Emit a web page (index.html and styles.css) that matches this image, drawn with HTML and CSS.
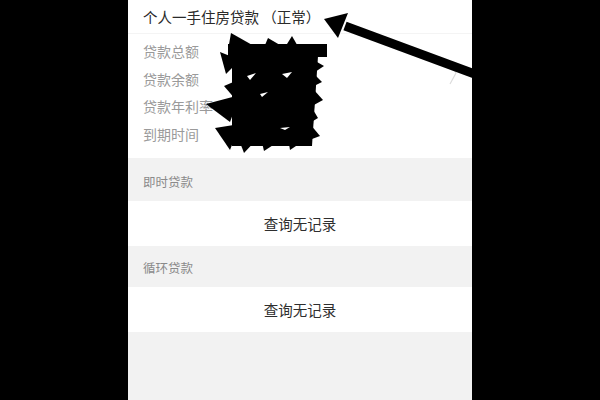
FILE: index.html
```html
<!DOCTYPE html>
<html lang="zh">
<head>
<meta charset="utf-8">
<link rel="stylesheet" href="styles.css">
</head>
<body>
<div class="stage">
  <main class="phone">
    <section class="loan">
      <div class="loan-title">个人一手住房贷款 （正常）</div>
      <ul class="loan-fields">
        <li>贷款总额</li>
        <li>贷款余额</li>
        <li>贷款年利率</li>
        <li>到期时间</li>
      </ul>
      <svg class="chevron" width="12" height="24" viewBox="0 0 12 24"><polyline points="2,2 8,12 2,23" fill="none" stroke="#dcdcdc" stroke-width="1.2"/></svg>
    </section>
    <div class="group-head">即时贷款</div>
    <div class="empty-row">查询无记录</div>
    <div class="group-head">循环贷款</div>
    <div class="empty-row">查询无记录</div>
    <div class="rest"></div>
  </main>
  <svg class="marks" width="600" height="400" viewBox="0 0 600 400">
    <g fill="#000">
      <rect x="228" y="44" width="99" height="13"/>
      <polygon points="231,33 254,46 228,50"/>
      <polygon points="268,38 285,48 262,52"/>
      <polygon points="292,36 300,50 282,52"/>
      <polygon points="232,56 318,56 312,146 232,146"/>
      <polygon points="220,52 240,60 226,74"/>
      <polygon points="310,58 324,66 312,74"/>
      <polygon points="312,72 322,82 310,88"/>
      <polygon points="314,90 323,100 312,106"/>
      <polygon points="206,104 240,95 230,122"/>
      <polygon points="224,86 238,80 236,100"/>
      <polygon points="312,108 318,118 308,124"/>
      <polygon points="310,124 320,136 304,142"/>
      <polygon points="215,128 240,124 230,150"/>
      <polygon points="236,132 262,134 244,153"/>
      <polygon points="260,134 284,138 264,151"/>
      <polygon points="286,126 314,134 290,150"/>
    </g>
    <g fill="#fff">
      <polygon points="247,76 256,73 250,80"/>
      <polygon points="282,74 292,72 287,78"/>
      <polygon points="260,94 268,92 262,97"/>
      <polygon points="280,128 290,127 285,130"/>
    </g>
    <line x1="345" y1="26" x2="480" y2="76" stroke="#000" stroke-width="9"/>
    <polygon points="324,19 348,13 338,38" fill="#000"/>
  </svg>
</div>
</body>
</html>
```
FILE: styles.css
```css
html, body {
  margin: 0;
  padding: 0;
  background: #000;
}
body {
  width: 600px;
  height: 400px;
  overflow: hidden;
  font-family: "Noto Sans CJK SC", "Noto Sans", sans-serif;
}
.stage {
  position: relative;
  width: 600px;
  height: 400px;
}
.phone {
  width: 344px;
  height: 400px;
  margin: 0 auto;
  background: #f2f2f2;
  display: flex;
  flex-direction: column;
}
.loan {
  position: relative;
  background: #fff;
  height: 158px;
  box-sizing: border-box;
}
.loan-title {
  height: 34px;
  line-height: 34px;
  padding-left: 15px;
  font-size: 14.5px;
  color: #2a2a2a;
  border-bottom: 1px solid #f4f4f4;
  box-sizing: border-box;
}
.loan-fields {
  list-style: none;
  margin: 0;
  padding: 4px 0 0 15px;
}
.loan-fields li {
  height: 27.7px;
  line-height: 27.7px;
  font-size: 14px;
  color: #9a9a9a;
}
.chevron {
  position: absolute;
  right: 12px;
  top: 61px;
}
.group-head {
  height: 43px;
  line-height: 48px;
  padding-left: 15px;
  font-size: 12.5px;
  color: #8a8a8a;
  box-sizing: border-box;
}
.group-head + .empty-row + .group-head {
  height: 41px;
  line-height: 44px;
}
.empty-row {
  height: 45px;
  line-height: 45px;
  background: #fff;
  text-align: center;
  font-size: 14.5px;
  color: #2e2e2e;
}
.rest {
  flex: 1;
}
.marks {
  position: absolute;
  left: 0;
  top: 0;
  pointer-events: none;
}
```
